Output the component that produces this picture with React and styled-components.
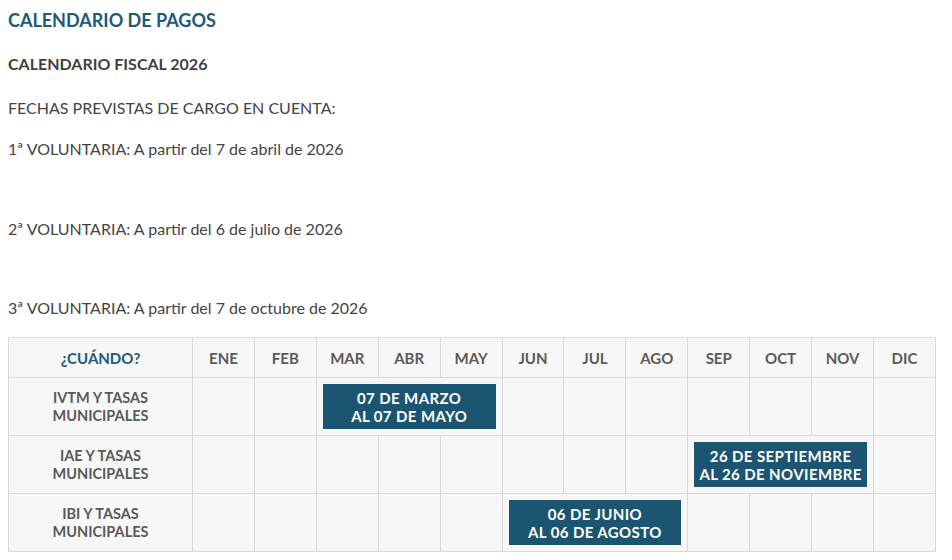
import React from "react";
import styled, { createGlobalStyle } from "styled-components";

const GlobalStyle = createGlobalStyle`
  body {
    margin: 8px;
    background: #ffffff;
    font-family: "Lato", "Liberation Sans", sans-serif;
    color: #444444;
  }
`;

const Page = styled.div`
  display: flex;
  flex-direction: column;
`;

const Title = styled.h2`
  margin: 0;
  font-size: 18px;
  line-height: 24px;
  font-weight: 700;
  color: #1d5a7a;
`;

const Subtitle = styled.h3`
  margin: ${(p) => p.$mt}px 0 0;
  font-size: 16px;
  line-height: 20px;
  font-weight: 700;
  color: #3f3f3f;
`;

const Text = styled.p`
  margin: ${(p) => p.$mt}px 0 0;
  font-size: 16px;
  line-height: 20px;
  color: #444444;
  min-height: 20px;
`;

const Table = styled.table`
  margin-top: ${(p) => p.$mt}px;
  width: 928px;
  border-collapse: collapse;
  table-layout: fixed;
  background: #f7f7f7;
  border: 1px solid #d9d9d9;
`;

const HeadCell = styled.th`
  height: 39px;
  padding: 0;
  border: 1px solid #d9d9d9;
  font-size: 15px;
  font-weight: 700;
  text-align: center;
  color: ${(p) => (p.$accent ? "#1d5a7a" : "#5a5a5a")};
`;

const RowHead = styled.td`
  height: 55px;
  padding: 0;
  border: 1px solid #d9d9d9;
  font-size: 14.5px;
  line-height: 17.5px;
  font-weight: 700;
  text-align: center;
  color: #5a5a5a;
`;

const Cell = styled.td`
  padding: 0;
  border: 1px solid #d9d9d9;
`;

const SpanCell = styled.td`
  padding: 6px;
  border: 1px solid #d9d9d9;
`;

const Bar = styled.div`
  display: flex;
  align-items: center;
  justify-content: center;
  height: 45px;
  background: #1b5571;
  color: #ffffff;
  font-size: 15px;
  line-height: 18px;
  letter-spacing: 0.4px;
  font-weight: 700;
  text-align: center;
`;

const months = ["ENE", "FEB", "MAR", "ABR", "MAY", "JUN", "JUL", "AGO", "SEP", "OCT", "NOV", "DIC"];

const rows = [
  { name: ["IVTM Y TASAS", "MUNICIPALES"], start: 2, span: 3, label: ["07 DE MARZO", "AL 07 DE MAYO"] },
  { name: ["IAE Y TASAS", "MUNICIPALES"], start: 8, span: 3, label: ["26 DE SEPTIEMBRE", "AL 26 DE NOVIEMBRE"] },
  { name: ["IBI Y TASAS", "MUNICIPALES"], start: 5, span: 3, label: ["06 DE JUNIO", "AL 06 DE AGOSTO"] },
];

const CalendarRow = ({ row }) => {
  const cells = [];
  for (let i = 0; i < 12; i++) {
    if (i === row.start) {
      cells.push(
        <SpanCell key={i} colSpan={row.span}>
          <Bar>
            {row.label[0]}
            <br />
            {row.label[1]}
          </Bar>
        </SpanCell>
      );
      i += row.span - 1;
    } else {
      cells.push(<Cell key={i} />);
    }
  }
  return (
    <tr>
      <RowHead>
        {row.name[0]}
        <br />
        {row.name[1]}
      </RowHead>
      {cells}
    </tr>
  );
};

export default function App() {
  return (
    <Page>
      <GlobalStyle />
      <Title>CALENDARIO DE PAGOS</Title>
      <Subtitle $mt={22}>CALENDARIO FISCAL 2026</Subtitle>
      <Text $mt={24}>FECHAS PREVISTAS DE CARGO EN CUENTA:</Text>
      <Text $mt={21}>1ª VOLUNTARIA: A partir del 7 de abril de 2026</Text>
      <Text $mt={20}>&nbsp;</Text>
      <Text $mt={20}>2ª VOLUNTARIA: A partir del 6 de julio de 2026</Text>
      <Text $mt={20}>&nbsp;</Text>
      <Text $mt={19}>3ª VOLUNTARIA: A partir del 7 de octubre de 2026</Text>
      <Table $mt={19}>
        <colgroup>
          <col style={{ width: 184 }} />
          {months.map((m) => (
            <col key={m} />
          ))}
        </colgroup>
        <thead>
          <tr>
            <HeadCell $accent>¿CUÁNDO?</HeadCell>
            {months.map((m) => (
              <HeadCell key={m}>{m}</HeadCell>
            ))}
          </tr>
        </thead>
        <tbody>
          {rows.map((r) => (
            <CalendarRow key={r.name[0]} row={r} />
          ))}
        </tbody>
      </Table>
    </Page>
  );
}
